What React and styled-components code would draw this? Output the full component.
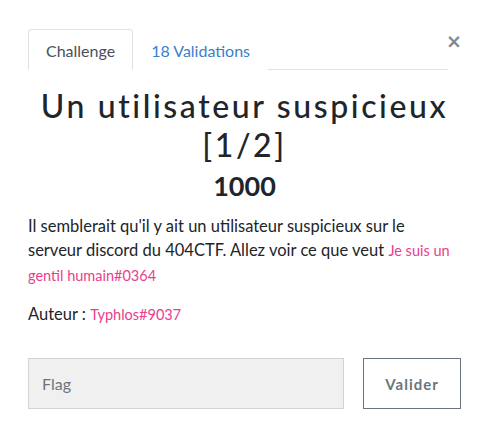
import styled, { createGlobalStyle } from "styled-components";

const GlobalStyle = createGlobalStyle`
  body {
    margin: 0;
    background: #fff;
    font-family: Lato, "Open Sans", sans-serif;
    color: #212529;
  }
`;

const Modal = styled.div`
  position: relative;
  padding: 29px 26px 0 28px;
`;

const TabBar = styled.div`
  display: flex;
  align-items: flex-end;
`;

const Tabs = styled.ul`
  display: flex;
  list-style: none;
  margin: 0 13px 0 0;
  padding: 0;
  flex: 1;
  border-bottom: 1px solid #dee2e6;
`;

const Tab = styled.li`
  margin-bottom: -1px;
  padding: 10px 17px 0 17px;
  height: 41px;
  box-sizing: border-box;
  font-size: 16px;
  line-height: 22px;
  color: ${(p) => (p.active ? "#495057" : "#3a7fc9")};
  background: #fff;
  border: 1px solid ${(p) => (p.active ? "#dee2e6" : "transparent")};
  border-bottom-color: ${(p) => (p.active ? "#fff" : "transparent")};
  border-radius: 4px 4px 0 0;
`;

const Close = styled.button`
  position: absolute;
  top: 32px;
  right: 25px;
  border: none;
  background: none;
  padding: 0;
  font-size: 19px;
  font-weight: 700;
  line-height: 1;
  color: #888;
  font-family: "DejaVu Sans", sans-serif;
`;

const Title = styled.h2`
  margin: 16px 0 0;
  text-align: center;
  font-size: 32px;
  font-weight: 500;
  letter-spacing: 2.6px;
  line-height: 39px;
`;

const Points = styled.h3`
  margin: 6px 0 0;
  text-align: center;
  font-size: 27px;
  font-weight: 700;
  line-height: 32px;
`;

const Text = styled.p`
  margin: ${(p) => p.margin || "0"};
  font-size: 16.5px;
  line-height: 24px;
`;

const Pink = styled.span`
  color: #e83e8c;
  font-size: 14.5px;
`;

const Form = styled.div`
  display: flex;
  gap: 19px;
  margin-top: 31px;
`;

const Input = styled.input`
  width: 317px;
  height: 51px;
  box-sizing: border-box;
  background: #f0f0f0;
  border: 1px solid #ced4da;
  padding: 0 13px;
  font-size: 16px;
  font-family: Lato, "Open Sans", sans-serif;
  color: #495057;
  &::placeholder {
    color: #6c757d;
  }
`;

const Button = styled.button`
  width: 98px;
  height: 51px;
  border: 1px solid #6c757d;
  background: #fff;
  color: #6c757d;
  font-size: 15px;
  font-weight: 700;
  letter-spacing: 1px;
  font-family: Lato, "Open Sans", sans-serif;
`;

export default function App() {
  return (
    <>
      <GlobalStyle />
      <Modal>
        <TabBar>
          <Tabs>
            <Tab active>Challenge</Tab>
            <Tab>18 Validations</Tab>
          </Tabs>
        </TabBar>
        <Close>×</Close>
        <Title>Un utilisateur suspicieux [1/2]</Title>
        <Points>1000</Points>
        <Text margin="12px 0 0">
          Il semblerait qu'il y ait un utilisateur suspicieux sur le
          <br />
          serveur discord du 404CTF. Allez voir ce que veut{" "}
          <Pink>
            Je suis un
            <br />
            gentil humain#0364
          </Pink>
        </Text>
        <Text margin="14px 0 0">
          Auteur : <Pink>Typhlos#9037</Pink>
        </Text>
        <Form>
          <Input placeholder="Flag" />
          <Button>Valider</Button>
        </Form>
      </Modal>
    </>
  );
}
